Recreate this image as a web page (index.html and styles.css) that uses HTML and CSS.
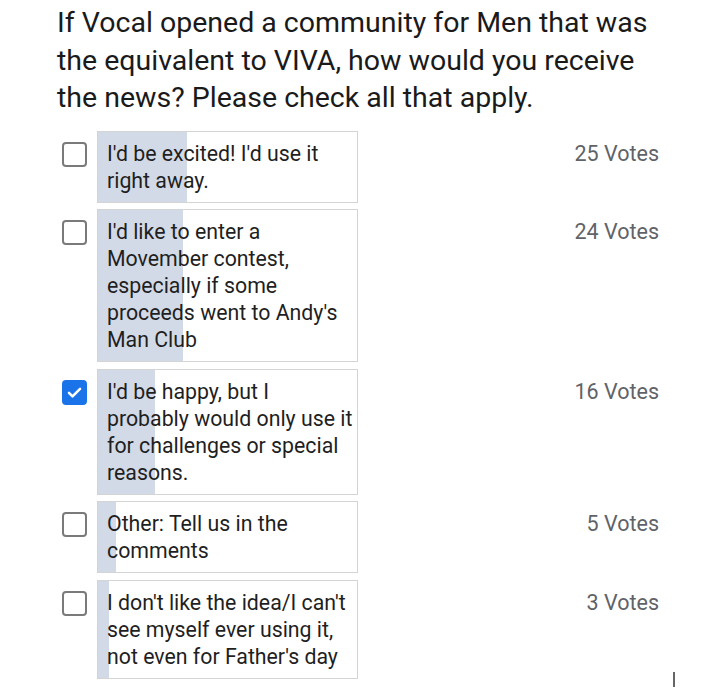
FILE: index.html
```html
<!DOCTYPE html>
<html>
<head>
<meta charset="utf-8">
<link rel="stylesheet" href="styles.css">
</head>
<body>
<div class="poll">
  <h1 class="question">If Vocal opened a community for Men that was<br>the equivalent to VIVA, how would you receive<br>the news? Please check all that apply.</h1>
  <div class="options">
    <div class="row">
      <span class="check"></span>
      <div class="answer" style="--p:34.25%">I'd be excited! I'd use it<br>right away.</div>
      <div class="votes">25 Votes</div>
    </div>
    <div class="row">
      <span class="check"></span>
      <div class="answer" style="--p:32.88%">I'd like to enter a<br>Movember contest,<br>especially if some<br>proceeds went to Andy's<br>Man Club</div>
      <div class="votes">24 Votes</div>
    </div>
    <div class="row">
      <span class="check checked"><svg viewBox="0 0 24 24" width="19" height="19"><path d="M5 12.5l4.5 4.5L19 7.5" fill="none" stroke="#fff" stroke-width="3.2" stroke-linecap="round" stroke-linejoin="round"/></svg></span>
      <div class="answer" style="--p:21.92%">I'd be happy, but I<br>probably would only use it<br>for challenges or special<br>reasons.</div>
      <div class="votes">16 Votes</div>
    </div>
    <div class="row">
      <span class="check"></span>
      <div class="answer" style="--p:6.85%">Other: Tell us in the<br>comments</div>
      <div class="votes">5 Votes</div>
    </div>
    <div class="row">
      <span class="check"></span>
      <div class="answer" style="--p:4.11%">I don't like the idea/I can't<br>see myself ever using it,<br>not even for Father's day</div>
      <div class="votes">3 Votes</div>
    </div>
  </div>
</div>
<span class="caret"></span>
</body>
</html>
```
FILE: styles.css
```css
html, body {
  margin: 0;
  padding: 0;
  background: #fff;
}
body {
  font-family: Roboto, "Noto Sans", Arial, sans-serif;
  color: #202124;
  width: 720px;
  height: 694px;
  overflow: hidden;
  position: relative;
}
.poll {
  padding: 4px 61px 0 57px;
}
.question {
  margin: 0;
  font-size: 28.5px;
  font-weight: 400;
  line-height: 37.5px;
  color: #1a1a1a;
  white-space: nowrap;
}
.options {
  margin-top: 14px;
  display: flex;
  flex-direction: column;
  gap: 6.5px;
}
.row {
  display: flex;
  align-items: flex-start;
}
.check {
  flex: none;
  box-sizing: border-box;
  width: 25px;
  height: 25px;
  margin: 11px 10px 0 5px;
  border: 2px solid #7a7a7a;
  border-radius: 4px;
  display: flex;
  align-items: center;
  justify-content: center;
}
.check.checked {
  background: #1a73e8;
  border-color: #1a73e8;
}
.answer {
  flex: none;
  box-sizing: border-box;
  width: 261px;
  padding: 8px 2px 8px 9px;
  border: 1px solid #d4d4d4;
  font-size: 21.3px;
  line-height: 27px;
  color: #1f1f1f;
  white-space: nowrap;
  overflow: hidden;
  background: linear-gradient(to right, #d3dae7 var(--p), #fff var(--p));
}
.votes {
  flex: 1;
  text-align: right;
  padding-top: 9px;
  font-size: 21.5px;
  line-height: 27px;
  color: #5f6368;
}
.caret {
  position: absolute;
  left: 673px;
  top: 672px;
  width: 2px;
  height: 15px;
  background: #666;
}
```
